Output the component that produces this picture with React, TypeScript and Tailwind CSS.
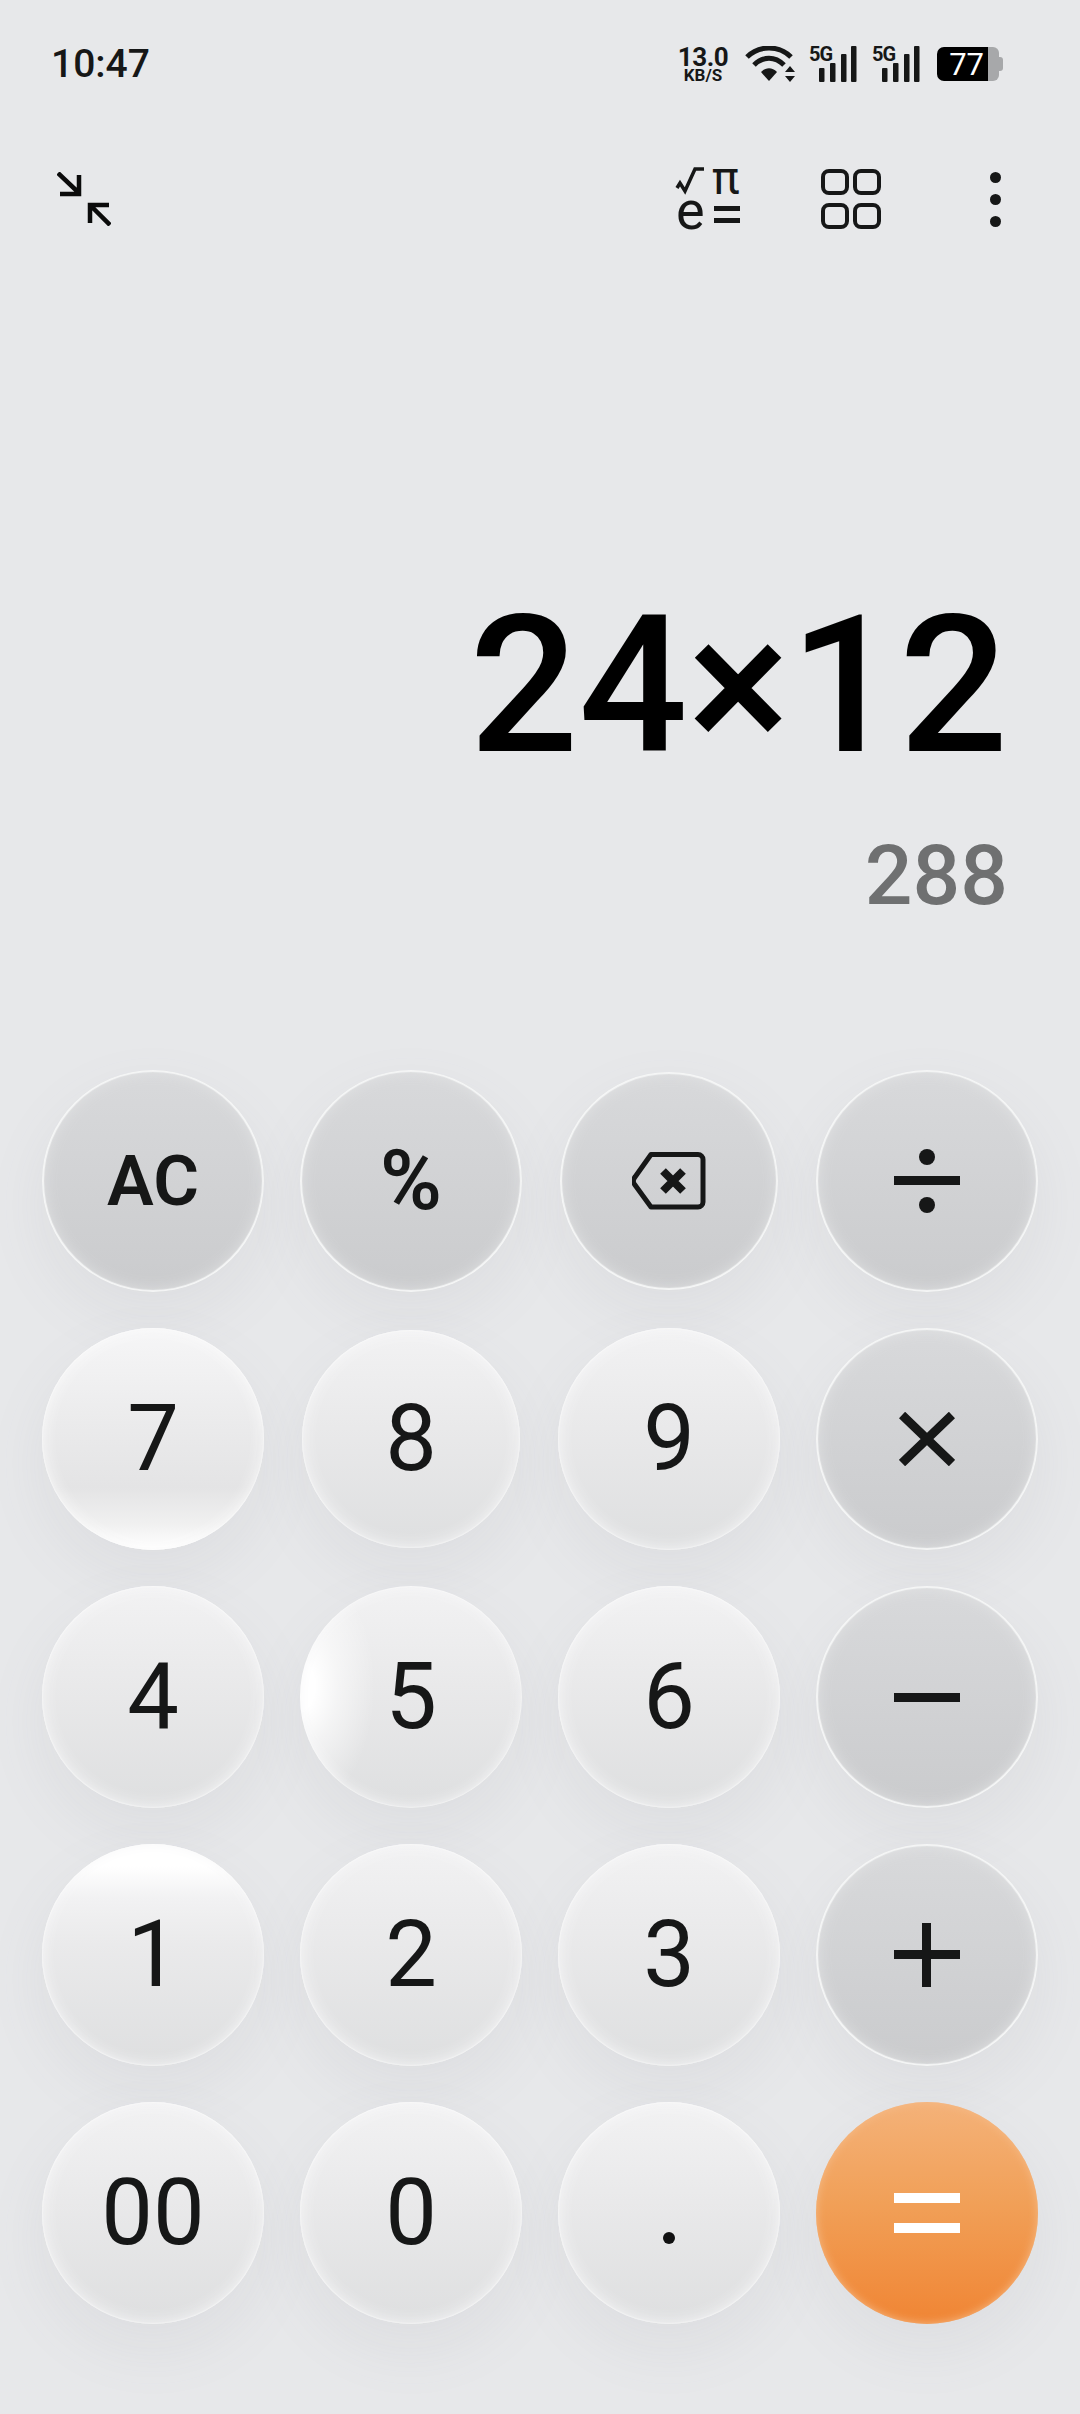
const font = "font-['Roboto',sans-serif]";

type Tone = 'plain' | 'glowBottom' | 'glowLeft' | 'glowTop' | 'op' | 'equals';

const tones: Record<Tone, string> = {
  plain:
    'bg-[linear-gradient(180deg,#f2f2f3_0%,#e9e9ea_45%,#dedfe0_100%)] shadow-[inset_0_0_2px_#ffffff,inset_0_0_16px_#f8f8f9,0_24px_60px_rgba(120,122,128,0.09)]',
  glowBottom:
    'bg-[linear-gradient(180deg,#f6f6f7_0%,#e9e9ea_50%,#e4e4e5_72%,#f0f0f0_88%,#ffffff_100%)] shadow-[inset_0_0_2px_#ffffff,inset_0_0_16px_#fbfbfb,0_24px_60px_rgba(120,122,128,0.09)]',
  glowLeft:
    'bg-[radial-gradient(ellipse_75px_125px_at_0%_45%,#ffffff_20%,rgba(255,255,255,0.55)_50%,rgba(255,255,255,0)_100%),linear-gradient(180deg,#f2f2f3_0%,#e9e9ea_45%,#dedfe0_100%)] shadow-[inset_0_0_2px_#ffffff,inset_0_0_14px_#f8f8f9,0_24px_60px_rgba(120,122,128,0.09)]',
  glowTop:
    'bg-[linear-gradient(180deg,#ffffff_0%,#ffffff_10%,#f2f2f3_24%,#eaeaeb_45%,#dedfe0_100%)] shadow-[inset_0_0_2px_#ffffff,inset_0_0_14px_#f8f8f9,0_24px_60px_rgba(120,122,128,0.09)]',
  op: 'bg-[linear-gradient(180deg,#d8d9db_0%,#d2d3d5_45%,#cacbcd_100%)] shadow-[inset_0_0_1px_2px_#f5f6f6,inset_0_0_16px_#e4e5e6,0_24px_60px_rgba(120,122,128,0.09)]',
  equals:
    'bg-[linear-gradient(180deg,#f4b279_0%,#f1a058_45%,#f08534_100%)] shadow-[inset_0_0_10px_#f5bb88,0_24px_60px_rgba(120,122,128,0.09)]',
};

const Key = ({ tone = 'plain', small, children }: { tone?: Tone; small?: boolean; children: React.ReactNode }) => (
  <div className="flex h-[222px] w-[222px] items-center justify-center">
    <div
      className={`flex items-center justify-center rounded-full text-[#161717] ${small ? 'h-[218px] w-[218px]' : 'h-[222px] w-[222px]'} ${tones[tone]}`}
    >
      {children}
    </div>
  </div>
);

const Digit = ({ children }: { children: string }) => (
  <span className={`${font} text-[92px] leading-none font-[450]`}>{children}</span>
);

const Signal = () => (
  <div className="relative h-[36px] w-[48px]">
    <span className={`${font} absolute top-[-3px] left-0 text-[20px] leading-[22px] font-bold tracking-[-1px] text-[#161717]`}>5G</span>
    <svg width="48" height="36" viewBox="0 0 48 36" className="absolute top-0 left-0" fill="#161717">
      <rect x="10" y="22" width="5.5" height="14" rx="1" />
      <rect x="21" y="17" width="5.5" height="19" rx="1" />
      <rect x="32" y="8" width="5.5" height="28" rx="1" />
      <rect x="42" y="0" width="5.5" height="36" rx="1" />
    </svg>
  </div>
);

const StatusBar = () => (
  <div className="flex h-[126px] items-center justify-between pt-[2px] pr-[77px] pl-[51px]">
    <span className={`${font} text-[39px] leading-none font-medium text-[#161717]`}>10:47</span>
    <div className="flex items-center">
      <div className={`${font} flex w-[56px] flex-col items-center font-bold text-[#161717]`}>
        <span className="text-[26px] leading-[22px] tracking-[-0.5px]">13.0</span>
        <span className="text-[17px] leading-[15px]">KB/S</span>
      </div>
      <svg width="50" height="36" viewBox="0 0 50 36" className="ml-[14px]" fill="none">
        <path d="M2 11C14 -1 34 -1 46 11" stroke="#161717" strokeWidth="5" />
        <path d="M9 19C18 10 30 10 39 19" stroke="#161717" strokeWidth="5" />
        <path d="M16 26C21 21 27 21 32 26L24 35Z" fill="#161717" />
        <path d="M45 20L50 26H40ZM45 36L50 30H40Z" fill="#161717" />
      </svg>
      <div className="ml-[14px]">
        <Signal />
      </div>
      <div className="ml-[15px]">
        <Signal />
      </div>
      <div className="ml-[17px] flex h-[34px] items-center">
        <div className={`${font} flex h-[34px] w-[51px] items-center justify-end rounded-l-[7px] bg-black pr-[4px] text-[31px] leading-none font-normal text-white`}>
          77
        </div>
        <div className="h-[34px] w-[11px] rounded-r-[6px] bg-[#a7a8aa]" />
        <div className="h-[14px] w-[4px] rounded-r-[3px] bg-[#a7a8aa]" />
      </div>
    </div>
  </div>
);

const ToolBar = () => (
  <div className="flex h-[146px] items-center justify-between pr-[79px] pl-[57px]">
    <svg width="54" height="54" viewBox="0 0 54 54" fill="none" stroke="#0b0b0b" strokeWidth="4.5">
      <path d="M1 1L22 21M22 3V22H3" />
      <path d="M53 53L33 33M33 51V33H52" />
    </svg>
    <div className="flex items-center">
      <svg width="66" height="64" viewBox="0 0 66 64" className="mr-[80px] overflow-visible" fill="#161717">
        <path d="M2 21L5 16L10 24L20 2H29" fill="none" stroke="#161717" strokeWidth="3.5" />
        <text x="37" y="27" fontFamily="Roboto" fontSize="46">π</text>
        <text x="1" y="62" fontFamily="Roboto" fontSize="54">e</text>
        <rect x="39" y="39" width="26" height="5" />
        <rect x="39" y="51" width="26" height="5" />
      </svg>
      <svg width="60" height="60" viewBox="0 0 60 60" className="mr-[109px]" fill="none" stroke="#161717" strokeWidth="4">
        <rect x="2" y="2" width="24" height="22" rx="6" />
        <rect x="34" y="2" width="24" height="22" rx="6" />
        <rect x="2" y="36" width="24" height="22" rx="6" />
        <rect x="34" y="36" width="24" height="22" rx="6" />
      </svg>
      <div className="flex flex-col gap-[11px]">
        <div className="h-[11px] w-[11px] rounded-full bg-[#161717]" />
        <div className="h-[11px] w-[11px] rounded-full bg-[#161717]" />
        <div className="h-[11px] w-[11px] rounded-full bg-[#161717]" />
      </div>
    </div>
  </div>
);

const Display = () => (
  <div className={`${font} flex h-[798px] flex-col items-end pt-[299px] pr-[72px]`}>
    <div className="text-[192px] leading-[230px] font-medium text-black">24×12</div>
    <div className="mt-[25px] text-[84px] leading-[100px] font-medium text-[#6f7071]">288</div>
  </div>
);

const Backspace = () => (
  <svg width="74" height="58" viewBox="0 0 74 58" fill="none" stroke="#161717">
    <path d="M19 2.5H66a5 5 0 0 1 5 5V50a5 5 0 0 1-5 5H19L3 33a6 6 0 0 1 0-8Z" strokeWidth="5" strokeLinejoin="round" />
    <path d="M31 19L51 39M51 19L31 39" strokeWidth="8" />
  </svg>
);

const Divide = () => (
  <svg width="66" height="64" viewBox="0 0 66 64" fill="#161717">
    <circle cx="33" cy="8" r="8" />
    <rect x="0" y="27" width="66" height="9" />
    <circle cx="33" cy="56" r="8" />
  </svg>
);

const Times = () => (
  <svg width="56" height="54" viewBox="0 0 56 54" fill="none" stroke="#161717" strokeWidth="9">
    <path d="M3 3L53 51M53 3L3 51" />
  </svg>
);

const Minus = () => (
  <svg width="66" height="9" viewBox="0 0 66 9" fill="#161717">
    <rect width="66" height="9" />
  </svg>
);

const Plus = () => (
  <svg width="66" height="64" viewBox="0 0 66 64" fill="#161717">
    <rect y="27" width="66" height="9" />
    <rect x="28" width="9" height="64" />
  </svg>
);

const Equals = () => (
  <svg width="66" height="40" viewBox="0 0 66 40" fill="#ffffff">
    <rect width="66" height="10" />
    <rect y="30" width="66" height="10" />
  </svg>
);

export default function App() {
  return (
    <div className="flex h-[2414px] w-[1080px] flex-col overflow-hidden bg-[#e7e8ea]">
      <StatusBar />
      <ToolBar />
      <Display />
      <div className="grid grid-cols-[repeat(4,222px)] gap-[36px] px-[42px]">
        <Key tone="op"><span className={`${font} text-[70px] leading-none font-semibold`}>AC</span></Key>
        <Key tone="op"><span className={`${font} text-[84px] leading-none font-semibold`}>%</span></Key>
        <Key tone="op" small><Backspace /></Key>
        <Key tone="op"><Divide /></Key>

        <Key tone="glowBottom"><Digit>7</Digit></Key>
        <Key small><Digit>8</Digit></Key>
        <Key><Digit>9</Digit></Key>
        <Key tone="op"><Times /></Key>

        <Key><Digit>4</Digit></Key>
        <Key tone="glowLeft"><Digit>5</Digit></Key>
        <Key><Digit>6</Digit></Key>
        <Key tone="op"><Minus /></Key>

        <Key tone="glowTop"><Digit>1</Digit></Key>
        <Key><Digit>2</Digit></Key>
        <Key><Digit>3</Digit></Key>
        <Key tone="op"><Plus /></Key>

        <Key><Digit>00</Digit></Key>
        <Key><Digit>0</Digit></Key>
        <Key>
          <div className="mt-[50px] h-[12px] w-[12px] rounded-full bg-[#111111]" />
        </Key>
        <Key tone="equals"><Equals /></Key>
      </div>
    </div>
  );
}
